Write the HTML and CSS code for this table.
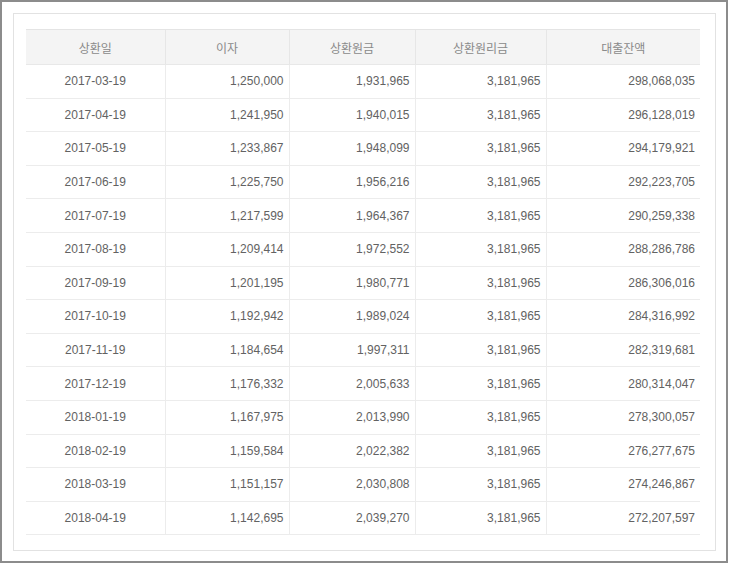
FILE: index.html
```html
<!DOCTYPE html>
<html lang="ko">
<head>
<meta charset="utf-8">
<link rel="stylesheet" href="styles.css">
</head>
<body>
<div class="frame">
  <div class="panel">
    <table class="sched">
      <colgroup>
        <col class="c1"><col class="c2"><col class="c3"><col class="c4"><col class="c5">
      </colgroup>
      <thead>
        <tr><th>상환일</th><th>이자</th><th>상환원금</th><th>상환원리금</th><th>대출잔액</th></tr>
      </thead>
      <tbody>
        <tr><td class="d">2017-03-19</td><td>1,250,000</td><td>1,931,965</td><td>3,181,965</td><td>298,068,035</td></tr>
        <tr><td class="d">2017-04-19</td><td>1,241,950</td><td>1,940,015</td><td>3,181,965</td><td>296,128,019</td></tr>
        <tr><td class="d">2017-05-19</td><td>1,233,867</td><td>1,948,099</td><td>3,181,965</td><td>294,179,921</td></tr>
        <tr><td class="d">2017-06-19</td><td>1,225,750</td><td>1,956,216</td><td>3,181,965</td><td>292,223,705</td></tr>
        <tr><td class="d">2017-07-19</td><td>1,217,599</td><td>1,964,367</td><td>3,181,965</td><td>290,259,338</td></tr>
        <tr><td class="d">2017-08-19</td><td>1,209,414</td><td>1,972,552</td><td>3,181,965</td><td>288,286,786</td></tr>
        <tr><td class="d">2017-09-19</td><td>1,201,195</td><td>1,980,771</td><td>3,181,965</td><td>286,306,016</td></tr>
        <tr><td class="d">2017-10-19</td><td>1,192,942</td><td>1,989,024</td><td>3,181,965</td><td>284,316,992</td></tr>
        <tr><td class="d">2017-11-19</td><td>1,184,654</td><td>1,997,311</td><td>3,181,965</td><td>282,319,681</td></tr>
        <tr><td class="d">2017-12-19</td><td>1,176,332</td><td>2,005,633</td><td>3,181,965</td><td>280,314,047</td></tr>
        <tr><td class="d">2018-01-19</td><td>1,167,975</td><td>2,013,990</td><td>3,181,965</td><td>278,300,057</td></tr>
        <tr><td class="d">2018-02-19</td><td>1,159,584</td><td>2,022,382</td><td>3,181,965</td><td>276,277,675</td></tr>
        <tr><td class="d">2018-03-19</td><td>1,151,157</td><td>2,030,808</td><td>3,181,965</td><td>274,246,867</td></tr>
        <tr><td class="d">2018-04-19</td><td>1,142,695</td><td>2,039,270</td><td>3,181,965</td><td>272,207,597</td></tr>
      </tbody>
    </table>
  </div>
</div>
</body>
</html>
```

FILE: styles.css
```css
html, body {
  margin: 0;
  padding: 0;
  background: #ffffff;
}
body {
  width: 729px;
  height: 564px;
  overflow: hidden;
  font-family: "Liberation Sans", Arial, "Noto Sans CJK KR", sans-serif;
}
.frame {
  box-sizing: border-box;
  width: 728px;
  height: 563px;
  border: 2px solid #8c8c8c;
  padding: 11px;
  background: #ffffff;
}
.panel {
  box-sizing: border-box;
  width: 703px;
  height: 538px;
  border: 1px solid #e2e2e2;
  padding: 15px 14px 12px 12px;
}
.sched {
  width: 674px;
  table-layout: fixed;
  border-collapse: collapse;
  font-size: 12px;
  color: #626262;
}
.c1 { width: 139px; }
.c2 { width: 124px; }
.c3 { width: 126px; }
.c4 { width: 131px; }
.c5 { width: 154px; }
.sched th {
  height: 34px;
  padding: 0;
  background: #f4f4f4;
  border-top: 1px solid #e4e4e4;
  border-bottom: 1px solid #e8e8e8;
  border-left: 1px solid #e6e6e6;
  font-family: "Noto Sans CJK KR", "Liberation Sans", sans-serif;
  font-weight: normal;
  font-size: 12px;
  color: #8a8a8a;
  text-align: center;
}
.sched td {
  height: 32.6px;
  padding: 0 5px 0 0;
  border-bottom: 1px solid #ececec;
  border-left: 1px solid #ececec;
  text-align: right;
  white-space: nowrap;
}
.sched td.d {
  text-align: center;
  padding: 0;
}
.sched th:first-child,
.sched td:first-child {
  border-left: none;
}
```
